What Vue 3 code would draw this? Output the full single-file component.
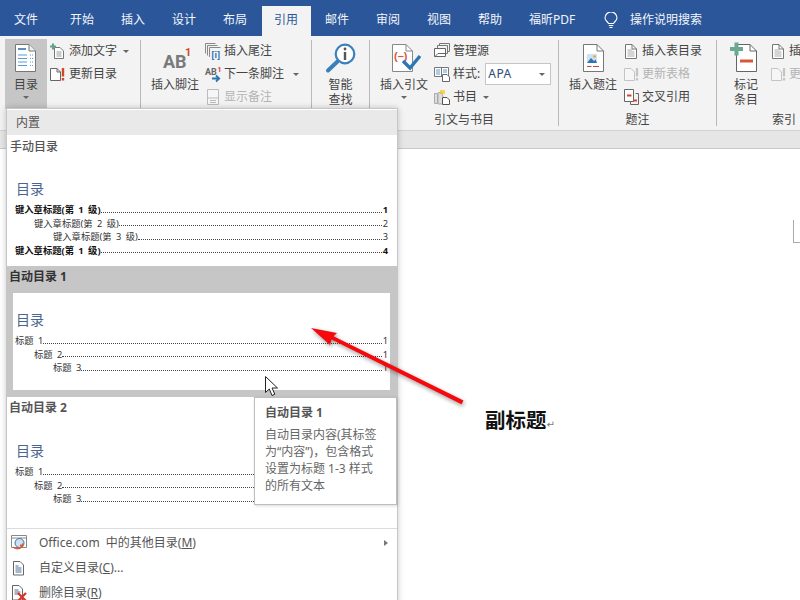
<script setup>
const tabs = [
  { t: '文件', c: 'first' }, { t: '开始' }, { t: '插入' }, { t: '设计' }, { t: '布局' },
  { t: '引用', c: 'active' }, { t: '邮件' }, { t: '审阅' }, { t: '视图' }, { t: '帮助' },
  { t: '福昕PDF', c: 'wide' }
]
const manual = [
  { t: '键入章标题(第 1 级)', n: 1, l: 0, b: true },
  { t: '键入章标题(第 2 级)', n: 2, l: 1 },
  { t: '键入章标题(第 3 级)', n: 3, l: 2 },
  { t: '键入章标题(第 1 级)', n: 4, l: 0, b: true }
]
const auto = [
  { t: '标题 1', n: 1, l: 0 },
  { t: '标题 2', n: 1, l: 1 },
  { t: '标题 3', n: 1, l: 2 }
]
const galleries = [
  { title: '手动目录', rows: manual, cls: 'plain' },
  { title: '自动目录 1', rows: auto, cls: 'selected' },
  { title: '自动目录 2', rows: auto, cls: '' }
]
const tipLines = ['自动目录内容(其标签', '为“内容”)，包含格式', '设置为标题 1-3 样式', '的所有文本']
</script>

<template>
  <div class="app">
    <header class="tabs">
      <div v-for="tab in tabs" :key="tab.t" class="tab" :class="tab.c">{{ tab.t }}</div>
      <svg class="lamp" width="14" height="17" viewBox="0 0 14 17">
        <path d="M4.5 11.5C3.5 9.5 1 8.5 1 6a6 6 0 0 1 12 0c0 2.500-2.500 3.500-3.500 5.500z" fill="none" stroke="#fff" stroke-width="1.1" />
        <path d="M4.800 13.500h4.400M5.500 15.500h3" stroke="#fff" stroke-width="1.200" />
      </svg>
      <div class="search">操作说明搜索</div>
    </header>

    <section class="ribbon">
      <!-- 目录 -->
      <div class="group g1">
        <div class="body">
          <div class="big toc">
            <svg class="bigicon" width="32" height="32" viewBox="0 0 32 32">
              <path d="M5.500.5H19L25.500 7v20.500h-20z" fill="#fff" stroke="#777" />
              <path d="M19 .5V7h6.500" fill="#eee" stroke="#777" />
              <path d="M8 5h8" stroke="#2e75b6" stroke-width="1.600" />
              <path d="M8 11h9M8 14.500h9M8 18h9M8 21.500h9" stroke="#5b9bd5" />
              <path d="M20 11h3M20 14.500h3M20 18h3M20 21.500h3" stroke="#5b9bd5" stroke-dasharray="1 1" />
            </svg>
            <span class="lbl">目录</span>
            <i class="caret mt"></i>
          </div>
          <div class="col c1">
            <div class="row">
              <svg class="ico" width="16" height="16" viewBox="0 0 16 16">
                <path d="M4.500 4.500H10l3.500 3.500v7.500h-9z" fill="#fff" stroke="#777" />
                <path d="M6.500 9h5M6.500 11h5M6.500 13h5" stroke="#999" />
                <path d="M0 3.500h6M3 .5v6" stroke="#5fa58a" stroke-width="2.200" />
              </svg>
              <span>添加文字</span><i class="caret ml6"></i>
            </div>
            <div class="row">
              <svg class="ico" width="16" height="16" viewBox="0 0 16 16">
                <path d="M.5 2.500H7L10.500 6v8.500H.5z" fill="#fff" stroke="#666" />
                <path d="M7 2.500V6h3.500" fill="none" stroke="#666" />
                <path d="M13 2v8.500M13 12v2.500" stroke="#d24726" stroke-width="2.400" />
              </svg>
              <span>更新目录</span>
            </div>
          </div>
        </div>
      </div>

      <!-- 脚注 -->
      <div class="group g2">
        <div class="body">
          <div class="big w48">
            <svg class="bigicon" width="32" height="32" viewBox="0 0 32 32">
              <text x="4" y="24" class="ab">AB</text>
              <text x="26" y="12" class="sup">1</text>
            </svg>
            <span class="lbl">插入脚注</span>
          </div>
          <div class="col">
            <div class="row">
              <svg class="ico" width="16" height="16" viewBox="0 0 16 16">
                <path d="M.5 10.500V.5h10M2.500 12.500V2.500h10M4.500 14V4.500h11" fill="none" stroke="#888" />
                <text x="6.500" y="14.500" class="brk">[i]</text>
              </svg>
              <span>插入尾注</span>
            </div>
            <div class="row">
              <svg class="ico" width="16" height="16" viewBox="0 0 16 16">
                <text x="0" y="9" class="abs">AB</text>
                <text x="12.500" y="6" class="sups">1</text>
                <path d="M7 12.500h7M11 9.500l3.200 3-3.200 3" fill="none" stroke="#2e75b6" stroke-width="1.800" />
              </svg>
              <span>下一条脚注</span><i class="caret ml10"></i>
            </div>
            <div class="row off">
              <svg class="ico" width="16" height="16" viewBox="0 0 16 16">
                <path d="M2.500.5h11v15h-11z" fill="#f6f6f6" stroke="#bbb" />
                <path d="M2.500 9h11M5 11.500h6M5 13.500h6" stroke="#bbb" />
              </svg>
              <span>显示备注</span>
            </div>
          </div>
        </div>
      </div>

      <!-- 智能查找 -->
      <div class="group g3">
        <div class="body center">
          <div class="big">
            <svg class="bigicon" width="32" height="32" viewBox="0 0 32 32">
              <circle cx="20" cy="10" r="9.300" fill="#fff" stroke="#3b80ba" stroke-width="2.200" />
              <path d="M12.500 17.500L3 26.500" stroke="#3b80ba" stroke-width="4" stroke-linecap="round" />
              <path d="M20 8v8" stroke="#555" stroke-width="2.400" />
              <circle cx="20" cy="5" r="1.400" fill="#555" />
            </svg>
            <span class="lbl two">智能查找</span>
          </div>
        </div>
      </div>

      <!-- 引文与书目 -->
      <div class="group g4">
        <div class="body">
          <div class="big w48">
            <svg class="bigicon" width="32" height="32" viewBox="0 0 32 32">
              <g transform="translate(2 0)">
                <path d="M2.500.5H16L22.500 7v20.500h-20z" fill="#fff" stroke="#888" />
                <path d="M16 .5V7h6.500" fill="none" stroke="#888" />
                <text x="4" y="16" class="cite">(–)</text>
                <path d="M13 17l7 7 10-12" fill="none" stroke="#2e75b6" stroke-width="3.400" />
              </g>
            </svg>
            <span class="lbl">插入引文</span>
            <i class="caret mt"></i>
          </div>
          <div class="col">
            <div class="row">
              <svg class="ico" width="16" height="16" viewBox="0 0 16 16">
                <path d="M5.500 3V.5h10v8H14M3.500 5V2.500h10v8H12" fill="none" stroke="#777" />
                <path d="M.5 5.500h11v8H.5z" fill="#fff" stroke="#666" />
                <path d="M1 13.500l3-3h8" fill="none" stroke="#666" />
              </svg>
              <span>管理源</span>
            </div>
            <div class="row">
              <svg class="ico" width="16" height="16" viewBox="0 0 16 16">
                <path d="M.5 1.500h14v9H.5zM7.500 1.500v9" fill="#fff" stroke="#777" />
                <path d="M2 4h4M2 6h4M2 8h4M9 4h4M9 6h4" stroke="#5b9bd5" />
                <path d="M8.500 8.500H13l2.500 2.500v4.500h-7z" fill="#fff" stroke="#666" />
              </svg>
              <span>样式:</span>
              <div class="combo"><span>APA</span><i class="caret"></i></div>
            </div>
            <div class="row">
              <svg class="ico" width="16" height="16" viewBox="0 0 16 16">
                <path d="M.5 4.500h3v10h-3zM4 4l3-1 2 4v8H4z" fill="#ddd" stroke="#aaa" />
                <path d="M6 1h5v4H6z" fill="#f2c811" opacity=".7" />
                <path d="M8.500 8.500H13l2.500 2.500v4.500h-7z" fill="#fff" stroke="#555" />
              </svg>
              <span>书目</span><i class="caret ml6"></i>
            </div>
          </div>
        </div>
        <div class="glabel">引文与书目</div>
      </div>

      <!-- 题注 -->
      <div class="group g5">
        <div class="body">
          <div class="big w48">
            <svg class="bigicon" width="32" height="32" viewBox="0 0 32 32">
              <path d="M6.500.5H20L26.500 7v20.500h-20z" fill="#fff" stroke="#777" />
              <path d="M20 .5V7h6.500" fill="none" stroke="#777" />
              <path d="M10 10h10v9H10z" fill="#cfe2f3" />
              <path d="M10 19l4-5 3 3 1.500-1.500L20 19z" fill="#2e75b6" />
              <circle cx="17.500" cy="12.500" r="1.300" fill="#f0a030" />
              <path d="M10 22.500h4.500M16 22.500h6" stroke="#d24726" />
            </svg>
            <span class="lbl">插入题注</span>
          </div>
          <div class="col">
            <div class="row">
              <svg class="ico" width="16" height="16" viewBox="0 0 16 16">
                <path d="M2.500 1.500H9L13.500 6v9.500h-11z" fill="#fff" stroke="#777" />
                <path d="M9 1.500V6h4.500" fill="none" stroke="#777" />
                <path d="M4.500 7h5M4.500 9h7M4.500 11h7M4.500 13h7" stroke="#aaa" />
              </svg>
              <span>插入表目录</span>
            </div>
            <div class="row off">
              <svg class="ico" width="16" height="16" viewBox="0 0 16 16">
                <path d="M1.500 2.500H8L11.500 6v8.500h-10z" fill="#f6f6f6" stroke="#c4c4c4" />
                <path d="M14 2v8.500M14 12v2.500" stroke="#c4c4c4" stroke-width="2.200" />
              </svg>
              <span>更新表格</span>
            </div>
            <div class="row">
              <svg class="ico" width="16" height="16" viewBox="0 0 16 16">
                <path d="M1.500.5h9v12h-9z" fill="#fff" stroke="#666" />
                <path d="M4 6.500h4.500" stroke="#d24726" stroke-width="2" />
                <path d="M12.500 4.500h3v11h-8V13" fill="none" stroke="#666" />
                <path d="M10 11.500h4" stroke="#d24726" stroke-width="2" />
              </svg>
              <span>交叉引用</span>
            </div>
          </div>
        </div>
        <div class="glabel">题注</div>
      </div>

      <!-- 索引 -->
      <div class="group g6">
        <div class="body">
          <div class="big w48">
            <svg class="bigicon" width="32" height="32" viewBox="0 0 32 32">
              <path d="M6.500.5H20L26.500 7v20.500h-20z" fill="#fff" stroke="#666" />
              <path d="M20 .5V7h6.500" fill="none" stroke="#666" />
              <path d="M0 5h13M6.500-1.500v13" stroke="#6aa88f" stroke-width="4" />
              <path d="M10 17h13" stroke="#d9583b" stroke-width="3" />
            </svg>
            <span class="lbl two">标记条目</span>
          </div>
          <div class="col">
            <div class="row">
              <svg class="ico" width="16" height="16" viewBox="0 0 16 16">
                <path d="M2.500 1.500H9L13.500 6v9.500h-11z" fill="#fff" stroke="#777" />
                <path d="M9 1.500V6h4.500" fill="none" stroke="#777" />
                <path d="M4.500 7h5M4.500 9h7M4.500 11h7M4.500 13h7" stroke="#aaa" />
              </svg>
              <span>插入索引</span>
            </div>
            <div class="row off">
              <svg class="ico" width="16" height="16" viewBox="0 0 16 16">
                <path d="M1.500 2.500H8L11.500 6v8.500h-10z" fill="#f6f6f6" stroke="#c4c4c4" />
                <path d="M14 2v8.500M14 12v2.500" stroke="#c4c4c4" stroke-width="2.200" />
              </svg>
              <span>更新索引</span>
            </div>
          </div>
        </div>
        <div class="glabel">索引</div>
      </div>
    </section>

    <div class="rulerband"></div>

    <main class="doc">
      <div class="corner"></div>
      <p class="subtitle">副标题<span class="pilcrow">↵</span></p>
    </main>

    <!-- 下拉菜单 -->
    <aside class="menu">
      <div class="menuhead">内置</div>
      <div v-for="g in galleries" :key="g.title" class="gallery" :class="g.cls">
        <div class="gtitle">{{ g.title }}</div>
        <div class="preview">
          <div class="ptitle">目录</div>
          <div v-for="(r, i) in g.rows" :key="i" class="pline" :class="[{ bold: r.b }, 'lv' + r.l]">
            <span>{{ r.t }}</span><span class="leader"></span><span class="num">{{ r.n }}</span>
          </div>
        </div>
      </div>
      <div class="mitem first">
        <svg class="mico" width="16" height="16" viewBox="0 0 16 16">
          <path d="M.5 .5h15v12H.5zM.5 3h15" fill="#fff" stroke="#888" />
          <circle cx="8.500" cy="8" r="4.500" fill="#cfe0f0" stroke="#2e75b6" />
          <path d="M2 12c3 2.500 7 2 9-1M9 10l2.500 1 .5-2.500" fill="none" stroke="#e0562f" stroke-width="1.600" />
        </svg>
        <span class="mtext">Office.com 中的其他目录(<u>M</u>)</span>
        <i class="rcaret"></i>
      </div>
      <div class="mitem">
        <svg class="mico" width="16" height="16" viewBox="0 0 16 16">
          <path d="M2.500 1.500H9L12.500 5v10h-10z" fill="#fff" stroke="#666" />
          <path d="M4.500 6h3M4.500 8h6M4.500 10h6M4.500 12h6" stroke="#4a6f94" />
        </svg>
        <span class="mtext">自定义目录(<u>C</u>)...</span>
      </div>
      <div class="mitem">
        <svg class="mico" width="16" height="16" viewBox="0 0 16 16">
          <path d="M1.500.5H8L11.500 4v11h-10z" fill="#fff" stroke="#666" />
          <path d="M3.500 5h4M3.500 7h6M3.500 9h4" stroke="#4a6f94" />
          <path d="M7 8l8 8M15 8l-8 8" stroke="#d9362b" stroke-width="2.200" />
        </svg>
        <span class="mtext">删除目录(<u>R</u>)</span>
      </div>
    </aside>

    <!-- 提示框 -->
    <div class="tip">
      <div class="tiptitle">自动目录 1</div>
      <div v-for="l in tipLines" :key="l" class="tipline">{{ l }}</div>
    </div>

    <!-- 标注箭头 -->
    <svg class="annot" width="800" height="600" viewBox="0 0 800 600">
      <path d="M311 328l26 5-3.500 3.200 130 64.300-2 3.700L331.500 339.500 330 345z" fill="#f6090d" />
    </svg>

    <!-- 鼠标 -->
    <svg class="cursor" width="14" height="22" viewBox="0 0 14 22">
      <path d="M.5.500v16l3.800-3.500 2.700 6.500 2.800-1.200-2.700-6.300h5.400z" fill="#fff" stroke="#222" stroke-width="1" />
    </svg>
  </div>
</template>

<style scoped>
.app {
  position: relative;
  width: 800px;
  height: 600px;
  overflow: hidden;
  background: #fff;
  color: #444;
  font: 12px/16px "Noto Sans", "Noto Sans CJK SC", sans-serif;
}

.tabs {
  display: flex;
  align-items: flex-end;
  height: 30px;
  padding: 6px 0 0 2px;
  background: #2b579a;
  color: #f4f6fa;
}
.tab {
  width: 49px;
  height: 30px;
  margin-right: 2px;
  padding-left: 12px;
  box-sizing: border-box;
  line-height: 28px;
  white-space: nowrap;
}
.tab.first { margin-right: 7px; }
.tab.active { background: #f3f3f3; color: #2b579a; }
.tab.wide { width: 70px; }
.lamp { align-self: center; margin: 0 0 1px 15px; }
.search { width: 90px; margin-left: 12px; line-height: 28px; height: 30px; white-space: nowrap; }

.ribbon {
  display: flex;
  height: 86px;
  padding: 4px 0;
  background: #f3f3f3;
  border-bottom: 1px solid #d2d2d2;
  box-sizing: content-box;
}
.group {
  display: flex;
  flex-direction: column;
  flex: none;
  box-sizing: border-box;
  border-right: 1px solid #b9b9b9;
}
.g1 { width: 141px; }
.g2 { width: 171px; }
.g3 { width: 58px; }
.g4 { width: 189px; }
.g5 { width: 158px; }
.g6 { width: 134px; border-right: 0; }
.body { display: flex; height: 72px; flex: none; }
.body.center { justify-content: center; }
.glabel { height: 14px; line-height: 16px; text-align: center; color: #444; }

.big {
  display: flex;
  flex-direction: column;
  align-items: center;
  flex: none;
  padding-top: 4px;
  box-sizing: border-box;
}
.bigicon { flex: none; overflow: visible; margin-bottom: 1px; }
.lbl { line-height: 15px; white-space: nowrap; }
.lbl.two { width: 24px; white-space: normal; text-align: center; }
.w48 { width: 48px; }
.toc {
  width: 42px;
  height: 70px;
  margin: -1px 0 0 5px;
  padding-top: 5px;
  background: #c6c6c6;
}
.g2 .big { margin-left: 10px; }
.g4 .big, .g5 .big { margin-left: 10px; }
.g6 .big { margin-left: 5px; }

.col { display: flex; flex-direction: column; gap: 3px; margin-left: 6px; padding-top: 1px; }
.c1 { margin-left: 3px; }
.g6 .col { margin-left: 0; }
.row { display: flex; align-items: center; gap: 3px; height: 20px; white-space: nowrap; }
.row.off { color: #b4b4b4; }
.ico { flex: none; overflow: visible; }

.caret {
  display: block;
  width: 0;
  height: 0;
  border-left: 3px solid transparent;
  border-right: 3px solid transparent;
  border-top: 3px solid #666;
}
.mt { margin-top: 4px; }
.ml6 { margin-left: 3px; }
.ml10 { margin-left: 6px; }

.combo {
  display: flex;
  align-items: center;
  justify-content: space-between;
  width: 66px;
  height: 22px;
  margin-left: 2px;
  padding: 0 5px 0 2px;
  box-sizing: border-box;
  background: #fff;
  border: 1px solid #c6c6c6;
  color: #2b4a78;
  letter-spacing: .5px;
}

.ab { font: 700 18px Roboto, sans-serif; fill: #7a7a7a; }
.sup { font: 700 11px Roboto, sans-serif; fill: #d24726; }
.abs { font: 700 9px Roboto, sans-serif; fill: #666; }
.sups { font: 700 7px Roboto, sans-serif; fill: #d24726; }
.brk { font: 700 9px "Liberation Sans", sans-serif; fill: #2e75b6; }
.cite { font: 700 11px "Liberation Sans", sans-serif; fill: #d9583b; }

.rulerband {
  height: 17px;
  background: #e6e6e6;
  border-bottom: 1px solid #c8c8c8;
}
.doc { position: relative; height: 451px; padding: 256px 0 0 485px; box-sizing: border-box; }
.corner {
  position: absolute;
  left: 793px;
  top: 71px;
  width: 7px;
  height: 23px;
  box-sizing: border-box;
  border-left: 1px solid #aaa;
  border-bottom: 1px solid #aaa;
}
.subtitle {
  margin: 0;
  font: 700 20.500px/28px "Noto Sans CJK SC", sans-serif;
  color: #111;
  white-space: nowrap;
}
.pilcrow { font: 400 10px "DejaVu Sans", sans-serif; color: #777; }

.menu {
  position: absolute;
  left: 6px;
  top: 108px;
  width: 392px;
  height: 500px;
  box-sizing: border-box;
  padding-top: 1px;
  background: #fff;
  border: 1px solid #c6c6c6;
  box-shadow: 0 0 6px rgba(0, 0, 0, .22);
}
.menuhead {
  height: 25px;
  padding-left: 9px;
  line-height: 26px;
  background: #e9e9e9;
  color: #555;
}
.gallery { height: 131px; padding: 0 7px 0 6px; box-sizing: border-box; color: #555; }
.gallery.selected { background: #c6c6c6; color: #333; }
.gtitle { height: 27px; margin-left: -4px; line-height: 21px; font-weight: 700; }
.plain .gtitle { font-weight: 500; line-height: 23px; margin-left: -3px; }
.preview { height: 97px; padding: 17px 0 0 2px; box-sizing: border-box; background: #fff; }
.ptitle {
  height: 20px;
  margin: 0 0 4px 1px;
  font-size: 14px;
  line-height: 19px;
  color: #4a6590;
}
.pline {
  display: flex;
  align-items: center;
  height: 13.500px;
  padding-right: 2px;
  font-size: 9.300px;
  line-height: 13.500px;
  word-spacing: 2px;
  color: #333;
  white-space: nowrap;
}
.pline.bold { font-weight: 700; color: #111; }
.lv1 { padding-left: 19px; }
.lv2 { padding-left: 38px; }
.leader {
  flex: 1;
  height: 0;
  margin: 5px 0 0;
  border-bottom: 1px dotted #444;
  background: linear-gradient(90deg, transparent 12%, #999 28%, #999 72%, transparent 88%);
}
.num { width: 6px; text-align: right; }

.mitem {
  display: flex;
  align-items: center;
  height: 25px;
  padding-left: 4px;
  color: #555;
  word-spacing: 3px;
}
.mitem.first { border-top: 1px solid #dcdcdc; height: 27px; padding: 2px 9px 0 4px; box-sizing: border-box; }
.mico { flex: none; margin-right: 12px; }
.mtext { flex: 1; white-space: nowrap; }
.rcaret {
  width: 0;
  height: 0;
  border-top: 3px solid transparent;
  border-bottom: 3px solid transparent;
  border-left: 4px solid #777;
}

.tip {
  position: absolute;
  left: 254px;
  top: 397px;
  width: 143px;
  height: 108px;
  box-sizing: border-box;
  padding: 7px 0 0 10px;
  background: #fff;
  border: 1px solid #bdbdbd;
  box-shadow: 1px 1px 3px rgba(0, 0, 0, .15);
  color: #666;
  line-height: 17px;
  white-space: nowrap;
}
.tiptitle { margin-bottom: 5px; font-weight: 700; color: #555; line-height: 16px; }
.tipline { height: 17px; }

.annot {
  position: absolute;
  left: 0;
  top: 0;
  filter: drop-shadow(1px 2px 2px rgba(0, 0, 0, .4));
  pointer-events: none;
}
.cursor { position: absolute; left: 265px; top: 376px; }
</style>
